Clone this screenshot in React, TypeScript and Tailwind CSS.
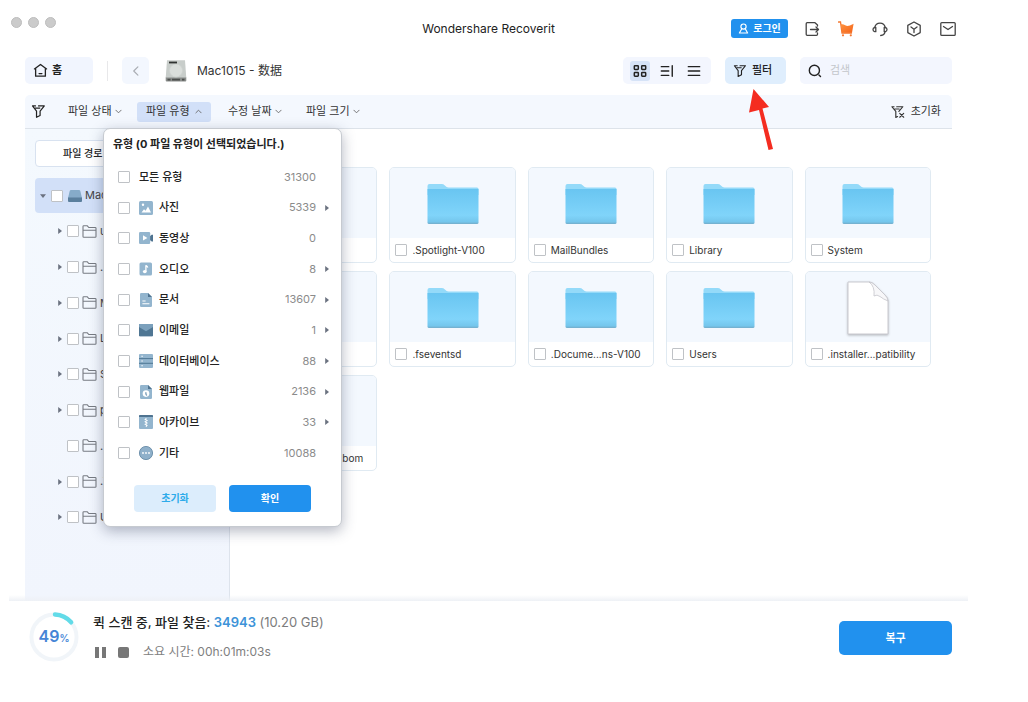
import type { ReactNode } from 'react'

const fileTypes = [
	{ id: 'photo', label: '사진', count: '5339', more: true },
	{ id: 'video', label: '동영상', count: '0', more: false },
	{ id: 'audio', label: '오디오', count: '8', more: true },
	{ id: 'doc', label: '문서', count: '13607', more: true },
	{ id: 'mail', label: '이메일', count: '1', more: true },
	{ id: 'db', label: '데이터베이스', count: '88', more: true },
	{ id: 'web', label: '웹파일', count: '2136', more: true },
	{ id: 'archive', label: '아카이브', count: '33', more: true },
	{ id: 'etc', label: '기타', count: '10088', more: false },
]

const tree = [
	{ name: 'usr', open: true },
	{ name: '.vol', open: true },
	{ name: 'Mail', open: true },
	{ name: 'Library', open: true },
	{ name: 'System', open: true },
	{ name: 'private', open: true },
	{ name: '.file', open: false },
	{ name: '.Trash', open: true },
	{ name: 'Users', open: true },
]

const files = [
	{ name: 'usr', kind: 'folder' },
	{ name: '.Spotlight-V100', kind: 'folder' },
	{ name: 'MailBundles', kind: 'folder' },
	{ name: 'Library', kind: 'folder' },
	{ name: 'System', kind: 'folder' },
	{ name: 'bin', kind: 'folder' },
	{ name: '.fseventsd', kind: 'folder' },
	{ name: '.Docume...ns-V100', kind: 'folder' },
	{ name: 'Users', kind: 'folder' },
	{ name: '.installer...patibility', kind: 'file' },
	{ name: '.installer...tion.bom', kind: 'file' },
]

const filters = [
	{ label: '파일 상태', active: false },
	{ label: '파일 유형', active: true },
	{ label: '수정 날짜', active: false },
	{ label: '파일 크기', active: false },
]

function Line({ className, children, w = 1.3 }: { className?: string; children: ReactNode; w?: number }) {
	return (
		<svg viewBox="0 0 16 16" className={className} fill="none" stroke="currentColor" strokeWidth={w} strokeLinecap="round" strokeLinejoin="round" aria-hidden="true">
			{children}
		</svg>
	)
}

function Funnel({ className }: { className?: string }) {
	return (
		<Line className={className} w={1.3}>
			<path d="M4.8 2H1.6l4.300 5.600v6.600l3.800-2V7.600L14.200 2H8" />
			<path d="M4.400 4.300h5" />
		</Line>
	)
}

function Check({ label }: { label: string }) {
	return <input type="checkbox" aria-label={label} className="size-3 shrink-0 appearance-none rounded-[1px] border border-[#bfc2c6] bg-white checked:bg-[#2191ee]" />
}

function Caret({ down = false }: { down?: boolean }) {
	return (
		<svg viewBox="0 0 6 6" className="size-1.5 shrink-0" fill="#6b7280" aria-hidden="true">
			{down ? <path d="M0 1.2h6L3 5z" /> : <path d="M1.2 0v6L5 3z" />}
		</svg>
	)
}

function TypeIcon({ id }: { id: string }) {
	return (
		<svg viewBox="0 0 14 14" className="size-3.5 shrink-0" aria-hidden="true">
			{id === 'photo' && (
				<>
					<rect width="14" height="14" rx="1.5" fill="#93b5ce" />
					<circle cx="4" cy="3.8" r="1.2" fill="#fff" />
					<path d="M2.500 11.500l2.500-3.300 1.600 1.600L9 5.400l3 6.100z" fill="#fff" />
				</>
			)}
			{id === 'video' && (
				<>
					<path d="M10.5 5.5l2.2-1.8H14.500v6.8h-1.8l-2.2-1.8z" fill="#4f7390" />
					<rect y="1" width="11.2" height="12" rx="1.2" fill="#93b5ce" />
					<path d="M4 4.2v5.4L8.4 7z" fill="#fff" />
				</>
			)}
			{id === 'audio' && (
				<>
					<rect x=".5" y=".5" width="12.5" height="13" rx="1.5" fill="#93b5ce" />
					<ellipse cx="5.8" cy="9.6" rx="1.9" ry="1.6" fill="#fff" />
					<path d="M6.9 9.6V3.2c.3.900 1.800 1.100 1.700 2.400" fill="none" stroke="#fff" strokeWidth="1.3" />
				</>
			)}
			{id === 'doc' && (
				<>
					<path d="M1 1.2Q1 0 2.2 0H9l4 4v8.8q0 1.2-1.2 1.2H2.2Q1 14 1 12.8z" fill="#93b5ce" />
					<path d="M9 0l4 4H9z" fill="#4f7390" />
					<path d="M3.4 8h3.2M3.4 10.7h7" stroke="#fff" strokeWidth="1.1" />
				</>
			)}
			{id === 'mail' && (
				<>
					<path d="M0 1h14v11.4q0 .8-.8.8H.8q-.8 0-.8-.8z" fill="#7ba0bc" />
					<path d="M0 4l7 4.2L14 4v8.4q0 .8-.8.8H.8q-.8 0-.8-.8z" fill="#4f7693" />
				</>
			)}
			{id === 'db' && (
				<>
					<rect width="14" height="14" rx="1" fill="#93b5ce" />
					<path d="M0 4.6h14M0 9.3h14" stroke="#46708d" strokeWidth=".9" />
					<path d="M2.4 2.3h1.4M2.4 7h1.4M2.4 11.7h1.4" stroke="#fff" strokeWidth="1.1" />
				</>
			)}
			{id === 'web' && (
				<>
					<path d="M1 1.2Q1 0 2.2 0H9l4 4v8.8q0 1.2-1.2 1.2H2.2Q1 14 1 12.8z" fill="#93b5ce" />
					<path d="M9 0l4 4H9z" fill="#4f7390" />
					<circle cx="7" cy="8.6" r="3.3" fill="#fff" />
					<path d="M6 7.2l1.8.3-.3 1.4.8 1-1 1.2-.9-1.5z" fill="#7b9fba" />
				</>
			)}
			{id === 'archive' && (
				<>
					<rect width="14" height="14" rx="1" fill="#93b5ce" />
					<path d="M0 1q0-1 1-1h12q1 0 1 1v1H0z" fill="#4f7390" />
					<path d="M7.4 3.4L6.2 4.5 8 5.6 6.2 6.8 8 8 6.2 9.2 8 10.4l-1 1.4" fill="none" stroke="#fff" strokeWidth="1.1" />
				</>
			)}
			{id === 'etc' && (
				<>
					<circle cx="7" cy="7" r="6.6" fill="#8fb0ca" stroke="#5b82a0" strokeWidth=".8" />
					<circle cx="4" cy="7" r=".9" fill="#fff" />
					<circle cx="7" cy="7" r=".9" fill="#fff" />
					<circle cx="10" cy="7" r=".9" fill="#fff" />
				</>
			)}
		</svg>
	)
}

function BigFolder() {
	return (
		<svg viewBox="0 0 52 42" className="h-[42px] w-[52px]" aria-hidden="true">
			<defs>
				<linearGradient id="front" x1="0" y1="0" x2="0" y2="1">
					<stop offset="0" stopColor="#69c5f1" />
					<stop offset=".75" stopColor="#80d4fa" />
					<stop offset=".94" stopColor="#74c6ec" />
					<stop offset="1" stopColor="#74acc9" />
				</linearGradient>
			</defs>
			<path d="M.5 3Q.5 1 2.5 1h12q2 0 3.4 1.4l1.4 1.3q1 .8 2.4.8H50q1.5 0 1.5 1.5V12H.5z" fill="#94daf9" />
			<path d="M.5 6h51v33.5q0 1.5-1.5 1.5H2Q.5 41 .5 39.5z" fill="url(#front)" />
		</svg>
	)
}

function BigFile() {
	return (
		<svg viewBox="0 0 46 58" className="h-[58px] w-[46px] drop-shadow-[0_1px_1px_rgba(0,0,0,0.25)]" aria-hidden="true">
			<path d="M3 3h21q3 0 6 3l10 10q3 3 3 6v33H3z" fill="#fff" stroke="#c9c9cf" strokeWidth="1" />
			<path d="M24 3q6 4 5 14q3-2 6 .5t8 4.500q0-3-3-6L30 6q-3-3-6-3z" fill="#f7f7f9" stroke="#c4c4ca" strokeWidth=".8" />
		</svg>
	)
}

function TitleBar() {
	return (
		<header className="grid h-[57px] grid-cols-[1fr_auto_1fr] items-center">
			<div className="flex gap-1.5 self-start pt-[17px] pl-0.5">
				<span className="size-[11px] rounded-full border border-[#bdbdbd] bg-[#cbcbcb]" />
				<span className="size-[11px] rounded-full border border-[#bdbdbd] bg-[#cbcbcb]" />
				<span className="size-[11px] rounded-full border border-[#bdbdbd] bg-[#cbcbcb]" />
			</div>
			<h1 className="text-[12px] leading-4 text-[#222]">Wondershare Recoverit</h1>
			<div className="flex items-center justify-end gap-4 pr-3 text-[#444]">
				<button className="flex h-[19px] w-[57px] items-center justify-center gap-1 rounded-[3px] bg-[#2191ee] text-[10px] font-bold text-white">
					<Line className="size-[11px]" w={1.7}>
						<circle cx="8" cy="5.2" r="3.8" />
						<path d="M5.5 8.4L2 14.5h12l-3.5-6.1" />
					</Line>
					로그인
				</button>
				<div className="flex gap-[18px]">
					<button aria-label="가져오기">
						<Line className="size-4">
							<path d="M13.5 5V4L11 1.7H3.2q-1 0-1 1v10.6q0 1 1 1h9.3q1 0 1-1v-1.3" />
							<path d="M6.5 8.5h8M12 6l2.5 2.5L12 11" />
						</Line>
					</button>
					<button aria-label="구매">
						<svg viewBox="0 0 16 16" className="size-4" aria-hidden="true">
							<defs>
								<linearGradient id="cart" x1="0" y1="0" x2="1" y2="1">
									<stop offset="0" stopColor="#ff9440" />
									<stop offset="1" stopColor="#f4631a" />
								</linearGradient>
							</defs>
							<path d="M.5 1h2L4 12h9.500" fill="none" stroke="#f4772f" strokeWidth="1.3" strokeLinecap="round" />
							<path d="M2.800 3q3.200 0 5 1.500T15.600 2.700L14 11.800H4z" fill="url(#cart)" />
							<circle cx="5" cy="14.300" r="1.1" fill="#f4772f" />
							<circle cx="12.8" cy="14.300" r="1.1" fill="#f4772f" />
						</svg>
					</button>
					<button aria-label="고객 지원">
						<Line className="size-4">
							<path d="M2.8 6.500a5.300 5.300 0 0 1 10.400 0" />
							<path d="M3.8 6.500H2.6Q1 6.800 1 8.600t1.600 2.100h1.200zM12.200 6.500h1.200q1.600.3 1.600 2.100t-1.600 2.100h-1.200z" />
							<path d="M13 10.800q-.6 3.300-4.300 3.700" />
						</Line>
					</button>
					<button aria-label="제품">
						<Line className="size-4">
							<path d="M8 1l6.200 3.400v7.200L8 15l-6.200-3.400V4.400z" />
							<path d="M5 6l3 2.200L11 6M8 8.200v3.300" />
						</Line>
					</button>
					<button aria-label="메일">
						<Line className="size-4">
							<rect x=".8" y="1.600" width="14.400" height="12.800" rx="1" />
							<path d="M3.500 5.500L8 8.500l4.500-3" />
						</Line>
					</button>
				</div>
			</div>
		</header>
	)
}

function Toolbar() {
	return (
		<nav className="mx-4 flex h-[27px] items-center text-[#222]">
			<button className="flex h-[27px] w-[68px] items-center gap-1 rounded-[5px] bg-[#f1f5fe] pl-2 text-[11px] font-bold">
				<Line className="size-[15px]" w={1.4}>
					<path d="M1.500 6.300L8 1.500l6.500 4.800M2.800 6v8h10.400V6M6.500 11.300h3" />
				</Line>
				홈
			</button>
			<span className="ml-3.5 h-5 w-px bg-[#e8e8ea]" />
			<button aria-label="뒤로" className="ml-3.5 flex size-[27px] items-center justify-center rounded-[5px] bg-[#f3f7fe] text-[#a9adb3]">
				<Line className="size-3" w={1.6}>
					<path d="M10.500 2.500L5 8l5.500 5.500" />
				</Line>
			</button>
			<svg viewBox="0 0 22 22" className="ml-4 size-[22px]" aria-hidden="true">
				<path d="M2 .3h18L21.300 18H.7z" fill="#c8cdca" />
				<path d="M.7 17.500h20.600v3q0 1-1 1H1.700q-1 0-1-1z" fill="#8a8d8b" />
				<circle cx="11" cy="10.500" r="6.500" fill="#dadedb" stroke="#cfd3d0" strokeWidth=".7" />
				<path d="M4 2.500h8" stroke="#303331" strokeWidth="1.800" />
				<path d="M2.500 19.700h3M7 19.700h8M17 19.700h2.500" stroke="#4c4f4d" strokeWidth="1.800" />
			</svg>
			<span className="ml-2.5 font-[Inter,'Noto_Sans_CJK_SC',sans-serif] text-[12px] leading-4 text-[#333]" lang="zh">Mac1015 - 数据</span>

			<div className="ml-auto flex items-center gap-3.5">
				<div className="flex h-[27px] items-center gap-[7px] rounded-[5px] bg-[#f3f6fe] px-[7px]">
					<button aria-label="격자" className="flex size-5 items-center justify-center rounded-[3px] bg-[#d6e3f7]">
						<Line className="size-3.5" w={1.7}>
							<rect x="1.500" y="2" width="4.600" height="4.200" rx=".8" />
							<rect x="9.900" y="2" width="4.600" height="4.200" rx=".8" />
							<rect x="1.500" y="9.800" width="4.600" height="4.200" rx=".8" />
							<rect x="9.900" y="9.800" width="4.600" height="4.200" rx=".8" />
						</Line>
					</button>
					<button aria-label="세부 정보" className="flex size-5 items-center justify-center">
						<Line className="size-3.5" w={1.6}>
							<path d="M1.500 3H10M1.500 8H10M1.500 13H10M14 2v12" />
						</Line>
					</button>
					<button aria-label="목록" className="flex size-5 items-center justify-center">
						<Line className="size-3.5" w={1.6}>
							<path d="M1.500 3h13M1.500 8h13M1.500 13h13" />
						</Line>
					</button>
				</div>
				<div className="relative">
					<button className="flex h-[27px] w-[61px] items-center gap-[5px] rounded-[5px] bg-[#dfeefd] pl-2 text-[11px] font-medium">
						<Funnel className="size-3.5" />
						필터
					</button>
					<svg viewBox="0 0 30 64" className="absolute top-[31px] left-[22px] z-10 h-16 w-[30px]" aria-hidden="true">
						<path d="M6.500 1L22 19l-6.500 1.600L26 61l-4.500 1L12 22 2 24.500z" fill="#f42c20" />
					</svg>
				</div>
				<label className="flex h-[27px] w-[152px] items-center gap-2 rounded-[5px] bg-[#f3f6fe] px-2">
					<Line className="size-3.5 shrink-0" w={1.6}>
						<circle cx="7.300" cy="7.300" r="5.800" />
						<path d="M12.500 12.500l1.800 1.800" />
					</Line>
					<input type="search" placeholder="검색" aria-label="검색" className="w-full min-w-0 bg-transparent text-[11px] outline-none placeholder:text-[#c3c6cb]" />
				</label>
			</div>
		</nav>
	)
}

function TypePopup() {
	return (
		<section className="absolute top-[33px] left-[78px] z-20 w-[239px] rounded-[7px] border border-[#c6cad0] bg-white pb-3.5 shadow-[0_4px_14px_rgba(40,50,80,0.35)]">
			<h2 className="pt-[7px] pl-[9px] text-[11px] leading-4 font-bold text-[#222]">유형 (0 파일 유형이 선택되었습니다.)</h2>
			<ul className="mt-2.5 flex h-[306px] flex-col justify-between pr-[11px] pl-3.5 text-[11px] text-[#222]">
				<li className="flex h-[30px] items-center">
					<Check label="모든 유형" />
					<span className="ml-[9px] font-medium">모든 유형</span>
					<span className="mr-3.5 ml-auto text-[#8b8b8b]">31300</span>
				</li>
				{fileTypes.map((t) => (
					<li key={t.id} className="flex h-[30px] items-center">
						<Check label={t.label} />
						<span className="ml-[9px] flex items-center gap-1.5 font-medium">
							<TypeIcon id={t.id} />
							{t.label}
						</span>
						<span className="ml-auto text-[#8b8b8b]">{t.count}</span>
						<span className="flex w-3.5 justify-end">{t.more && <Caret />}</span>
					</li>
				))}
			</ul>
			<div className="mt-[17px] flex justify-center gap-[13px] text-[10px] font-bold">
				<button className="h-[27px] w-[82px] rounded-[4px] bg-[#dcedfc] text-[#2eabea]">초기화</button>
				<button className="h-[27px] w-[82px] rounded-[4px] bg-[#2191ee] text-white">확인</button>
			</div>
		</section>
	)
}

function FilterBar() {
	return (
		<div className="relative mx-4 mt-[11px] flex h-[34px] items-center rounded-t-[5px] border-b border-[#dde3ea] bg-[#f4f8fe] pr-[11px] pl-1.5 text-[11px] text-[#333]">
			<Funnel className="size-[15px] text-[#222]" />
			<div className="ml-[13px] flex gap-1">
				{filters.map((f) => (
					<button
						key={f.label}
						className={f.active ? 'mr-1 flex h-5 w-[74px] items-center justify-between rounded-[3px] bg-[#d2e0f8] px-[9px]' : 'flex h-5 w-[74px] items-center gap-[3px] px-[9px]'}
					>
						<span className="whitespace-nowrap">{f.label}</span>
						<Line className="size-[7px] shrink-0 text-[#666]" w={2}>
							{f.active ? <path d="M2 11l6-6 6 6" /> : <path d="M2 5l6 6 6-6" />}
						</Line>
					</button>
				))}
			</div>
			<button className="ml-auto flex items-center gap-1.5">
				<Line className="size-3.5" w={1.3}>
					<path d="M3.500 2H1l4.500 5.400v6.800l2-1M9 7.400L13.500 2H6.500M4.300 4.600h5" />
					<path d="M10 9.500l4.500 4.500M14.500 9.500L10 14" />
				</Line>
				초기화
			</button>
			<TypePopup />
		</div>
	)
}

function Sidebar() {
	return (
		<aside className="w-[205px] shrink-0 border-r border-[#dde3ec] bg-gradient-to-b from-[#f4f9fe] to-[#f1f5fd] px-2.5 pt-[11px] text-[11px] text-[#444]">
			<button className="block h-[27px] w-full rounded-[4px] border border-[#d8e2f0] bg-white pl-[27px] text-left text-[10px] font-medium text-[#222]">파일 경로</button>
			<ul className="mt-[11px] flex h-[357px] flex-col justify-between">
				<li className="flex h-[35px] items-center rounded-[4px] bg-[#d2e0f8] pl-[5px]">
					<Caret down />
					<span className="mx-[5px] flex">
						<Check label="Mac1015" />
					</span>
					<svg viewBox="0 0 14 12" className="h-3 w-3.5 shrink-0" aria-hidden="true">
						<path d="M3 0h8q1 0 1.300 1L14 8H0l1.700-7Q2 0 3 0z" fill="#86abc9" />
						<path d="M0 7.500h14V11q0 1-1 1H1q-1 0-1-1z" fill="#5a7f9d" />
					</svg>
					<span className="ml-[3px] truncate">Mac1015</span>
				</li>
				{tree.map((n) => (
					<li key={n.name} className="flex h-[35px] items-center pl-[22px]">
						<span className="flex w-2.5 shrink-0">{n.open && <Caret />}</span>
						<Check label={n.name} />
						<svg viewBox="0 0 15 13" className="mx-[3px] h-[13px] w-[15px] shrink-0" fill="none" stroke="#777b82" strokeWidth="1.1" aria-hidden="true">
							<path d="M1 11.500V1.500Q1 .8 1.700.8h3.600l1.500 1.700h6.400q.8 0 .8.8v8.200q0 .8-.8.8H1.800q-.8 0-.8-.8zM1 5.300h13" />
						</svg>
						<span className="truncate">{n.name}</span>
					</li>
				))}
			</ul>
		</aside>
	)
}

function Files() {
	return (
		<main className="grid flex-1 grid-cols-5 content-start gap-x-3 gap-y-2 pt-[38px] pr-[21px] pl-[21px]">
			{files.map((f) => (
				<label key={f.name} className="block h-24 min-w-0 overflow-hidden rounded-[5px] border border-[#e0eaf2] bg-white">
					<span className="flex h-[70px] items-center justify-center bg-[#f3f8fe] pt-0.5">
						{f.kind === 'folder' ? <BigFolder /> : <BigFile />}
					</span>
					<span className="flex h-6 items-center gap-[5px] pl-[5px] text-[10px] text-[#333]">
						<Check label={f.name} />
						<span className="whitespace-nowrap">{f.name}</span>
					</span>
				</label>
			))}
		</main>
	)
}

function Footer() {
	return (
		<footer className="relative flex h-[101px] items-start bg-white pr-4 pl-5">
			<div className="absolute inset-x-0 bottom-full h-1.5 bg-gradient-to-b from-transparent to-[#eef1f6]" />
			<div className="mt-[11px] grid size-[50px] place-items-center">
				<svg viewBox="0 0 51 51" className="col-start-1 row-start-1 size-[50px]" fill="none" aria-hidden="true">
					<circle cx="25.500" cy="25.500" r="23" stroke="#f1f5f9" strokeWidth="4" />
					<path d="M26.500 2.500A23 23 0 0 1 43 10.500" stroke="#62dbe8" strokeWidth="4.500" strokeLinecap="round" />
				</svg>
				<span className="col-start-1 row-start-1 text-[16px] leading-5 font-semibold text-[#4585d6]">
					49<span className="text-[10px]">%</span>
				</span>
			</div>
			<div className="mt-3 ml-3.5">
				<p className="text-[13px] leading-[18px] font-medium text-[#222]">
					퀵 스캔 중, 파일 찾음: <b className="font-semibold text-[#3d93d8]">34943</b> <span className="font-normal text-[#7c7c7c]">(10.20 GB)</span>
				</p>
				<div className="mt-3 flex items-center text-[12px] leading-[18px] text-[#808080]">
					<button aria-label="일시 정지" className="ml-0.5 flex gap-[3px]">
						<span className="h-[11px] w-1 bg-[#777]" />
						<span className="h-[11px] w-1 bg-[#777]" />
					</button>
					<button aria-label="중지" className="mr-3.5 ml-3 size-[11px] rounded-[2px] bg-[#777]" />
					<span>소요 시간: 00h:01m:03s</span>
				</div>
			</div>
			<button className="mt-5 ml-auto h-[34px] w-[113px] rounded-[5px] bg-[#2191ee] text-[11px] font-bold text-white">복구</button>
		</footer>
	)
}

export default function App() {
	return (
		<div className="flex min-h-screen flex-col bg-white pr-[60px] pl-[9px] font-[Inter,'Noto_Sans_CJK_KR',sans-serif]" lang="ko">
			<TitleBar />
			<Toolbar />
			<FilterBar />
			<div className="mx-4 flex flex-1">
				<Sidebar />
				<Files />
			</div>
			<Footer />
		</div>
	)
}
